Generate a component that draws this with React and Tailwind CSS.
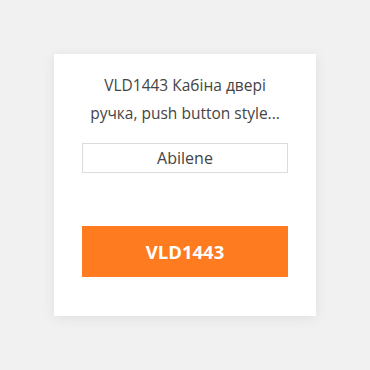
import React from "react"

export default function App() {
    return (
        <div className="w-[370px] h-[370px] bg-[#f1f1f1] flex items-center justify-center"
            style={{ fontFamily: "'Open Sans', 'Noto Sans', sans-serif" }}>
            <div className="w-[262px] h-[262px] bg-white shadow-[0_2px_12px_rgba(0,0,0,0.08)] px-[28px] pt-[17px] flex flex-col">
                <p className="text-[15.5px] leading-[28px] text-[#444] text-center -mx-[10px]">
                    VLD1443 Кабіна двері<br />ручка, push button style...
                </p>
                <div className="mt-[16px] h-[30px] border border-[#dcdcdc] flex items-center justify-center text-[16px] text-[#444]">
                    Abilene
                </div>
                <button className="mt-[53px] h-[51px] bg-[#ff7b1f] text-white font-bold text-[18.5px]">
                    VLD1443
                </button>
            </div>
        </div>
    )
}
